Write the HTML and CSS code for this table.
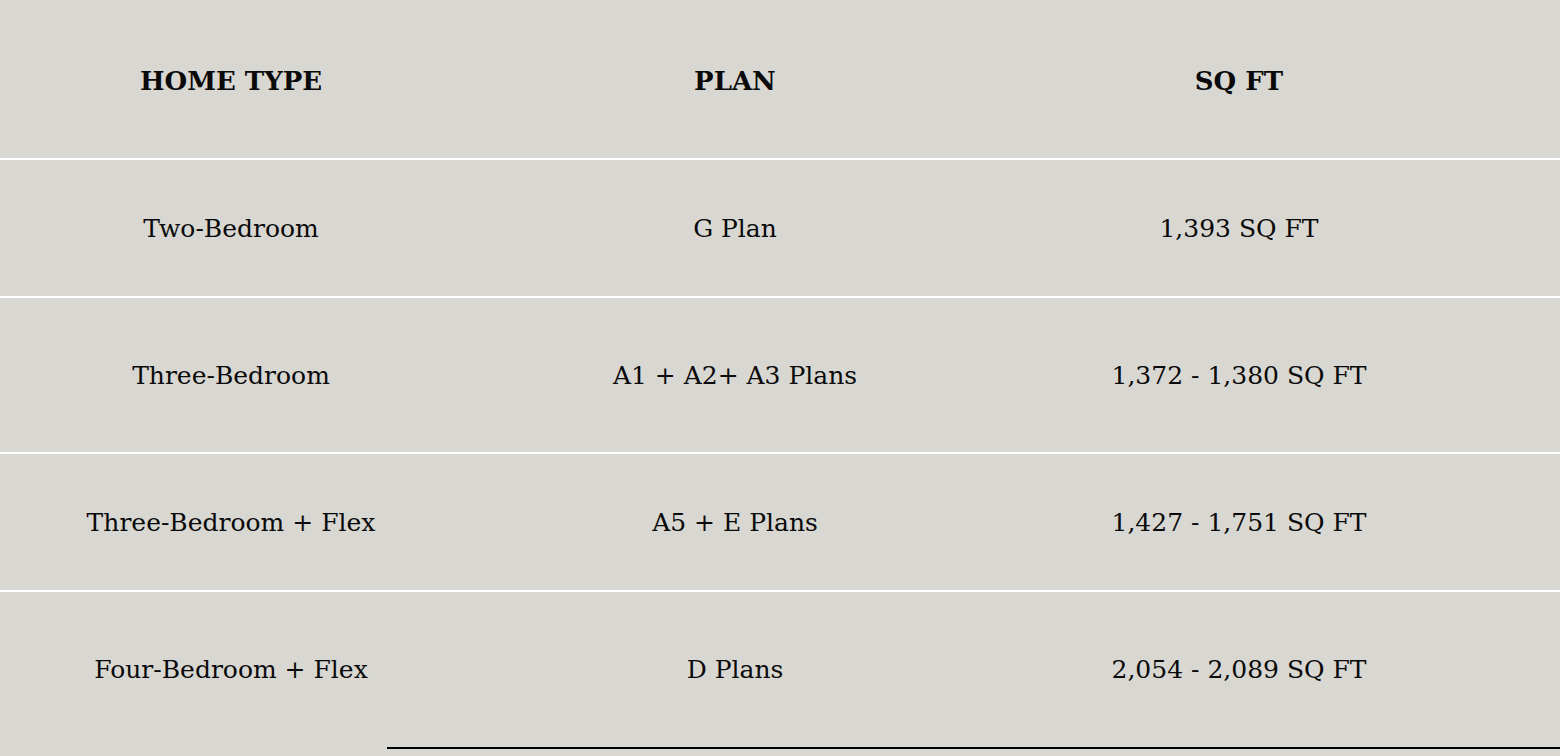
FILE: index.html
```html
<!DOCTYPE html>
<html lang="en">
<head>
<meta charset="utf-8">
<title>Home Types</title>
<link rel="stylesheet" href="styles.css">
</head>
<body>
<div class="table">
  <div class="row head">
    <div class="cell">HOME TYPE</div>
    <div class="cell">PLAN</div>
    <div class="cell">SQ FT</div>
  </div>
  <div class="row r1">
    <div class="cell">Two-Bedroom</div>
    <div class="cell">G Plan</div>
    <div class="cell">1,393 SQ FT</div>
  </div>
  <div class="row r2">
    <div class="cell">Three-Bedroom</div>
    <div class="cell">A1 + A2+ A3 Plans</div>
    <div class="cell">1,372 - 1,380 SQ FT</div>
  </div>
  <div class="row r3">
    <div class="cell">Three-Bedroom + Flex</div>
    <div class="cell">A5 + E Plans</div>
    <div class="cell">1,427 - 1,751 SQ FT</div>
  </div>
  <div class="row r4 last">
    <div class="cell">Four-Bedroom + Flex</div>
    <div class="cell">D Plans</div>
    <div class="cell">2,054 - 2,089 SQ FT</div>
  </div>
  <div class="rule"></div>
</div>
</body>
</html>
```

FILE: styles.css
```css
html, body {
  margin: 0;
  padding: 0;
  background: #d8d7d2;
}
body {
  font-family: "DejaVu Serif", "Liberation Serif", serif;
  color: #0a0a0a;
  overflow: hidden;
  height: 756px;
}
.table {
  width: 1560px;
}
.row {
  display: grid;
  grid-template-columns: 462px 546px 462px 1fr;
  align-items: center;
  border-bottom: 2px solid #ffffff;
}
.row.last {
  border-bottom: none;
}
.cell {
  text-align: center;
  font-size: 25px;
  white-space: nowrap;
}
.head { height: 158px; }
.head .cell {
  font-weight: bold;
  font-size: 26px;
  padding-top: 3px;
}
.r1 { height: 136px; }
.r2 { height: 154px; }
.r3 { height: 136px; }
.r4 { height: 155px; }
.rule {
  margin-left: 387px;
  height: 2px;
  background: #000;
}
```
